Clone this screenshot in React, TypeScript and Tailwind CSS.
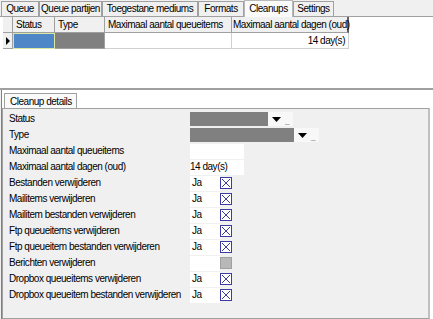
import React from "react";

const tabs = [
  { label: "Queue", w: "w-[38px]" },
  { label: "Queue partijen", w: "w-[63px]" },
  { label: "Toegestane mediums", w: "w-[96px]" },
  { label: "Formats", w: "w-[46px]" },
  { label: "Cleanups", w: "w-[49px]", active: true },
  { label: "Settings", w: "w-[41px]" },
];

const checkRows = [
  { label: "Bestanden verwijderen", ja: true },
  { label: "Mailitems verwijderen", ja: true },
  { label: "Mailitem bestanden verwijderen", ja: true },
  { label: "Ftp queueitems verwijderen", ja: true },
  { label: "Ftp queueitem bestanden verwijderen", ja: true },
  { label: "Berichten verwijderen", ja: false },
  { label: "Dropbox queueitems verwijderen", ja: true },
  { label: "Dropbox queueitem bestanden verwijderen", ja: true },
];

const CheckBox: React.FC<{ checked: boolean }> = ({ checked }) =>
  checked ? (
    <svg width="12" height="12" viewBox="0 0 12 12" className="block">
      <rect x="0.5" y="0.5" width="11" height="11" fill="#fff" stroke="#3c3ca0" />
      <path d="M2 2 L10 10 M10 2 L2 10" stroke="#3c3ca0" strokeWidth="1" />
    </svg>
  ) : (
    <svg width="12" height="12" viewBox="0 0 12 12" className="block">
      <rect x="0.5" y="0.5" width="11" height="11" fill="#b8b8b8" stroke="#a0a0a0" />
    </svg>
  );

const DropArrow: React.FC = () => (
  <div className="flex items-center h-full bg-[#f8f8f8]">
    <svg width="9" height="5" viewBox="0 0 9 5" className="ml-[4px]">
      <path d="M0 0 H9 L4.5 5 Z" fill="#000" />
    </svg>
    <span className="ml-[4px] mr-[4px] self-end mb-[1px] text-[8px] leading-none text-[#777]">_</span>
  </div>
);

export default function App() {
  return (
    <div
      className="w-[433px] h-[319px] overflow-hidden bg-[#f0f0f0] text-[10px] tracking-[-0.48px] text-black leading-none flex flex-col whitespace-nowrap"
      style={{ fontFamily: '"Liberation Sans", Arial, sans-serif' }}
    >
      {/* main tab strip */}
      <div className="h-[17px] flex items-end pl-[1px] border-b border-[#a0a0a0] shrink-0">
        {tabs.map((t) => (
          <div
            key={t.label}
            className={`${t.w} flex items-center justify-center border border-b-0 border-[#a0a0a0] ${
              t.active ? "h-[17px] bg-[#fafafa] -mb-[1px] border-[#b8b8b8]" : "h-[15px] bg-[#f0f0f0]"
            }`}
          >
            {t.label}
          </div>
        ))}
      </div>

      {/* grid */}
      <div className="h-[71px] bg-white pl-[3px] shrink-0">
        <div className="flex h-[16px]">
          <div className="w-[10px] bg-[#f0f0f0] border-r border-b border-[#a0a0a0]" />
          <div className="w-[42px] bg-[#f0f0f0] border-r border-b border-[#a0a0a0] flex items-center pl-[3px]">Status</div>
          <div className="w-[50px] bg-[#f0f0f0] border-r border-b border-[#a0a0a0] flex items-center pl-[3px]">Type</div>
          <div className="w-[127px] bg-[#f0f0f0] border-r border-b border-[#a0a0a0] flex items-center pl-[3px]">Maximaal aantal queueitems</div>
          <div className="w-[117px] bg-[#f0f0f0] border-r-2 border-b border-r-[#606060] border-b-[#a0a0a0] flex items-center pl-[1px]">Maximaal aantal dagen (oud)</div>
        </div>
        <div className="flex h-[16px]">
          <div className="w-[10px] bg-[#f0f0f0] border-r border-b border-[#a0a0a0] flex items-center justify-center">
            <svg width="4" height="8" viewBox="0 0 4 8"><path d="M0 0 L4 4 L0 8 Z" fill="#000" /></svg>
          </div>
          <div className="w-[42px] bg-[#4f86c8] border border-[#d8e8a0]" />
          <div className="w-[50px] bg-[#808080] border-r border-b border-[#a0a0a0]" />
          <div className="w-[127px] border-r border-b border-[#d0d0d0]" />
          <div className="w-[117px] border-r border-b border-[#d0d0d0] flex items-center justify-end pr-[3px]">14 day(s)</div>
        </div>
      </div>

      {/* splitter */}
      <div className="h-[2px] bg-[#a0a0a0] shrink-0" />

      {/* details area */}
      <div className="flex-1 flex bg-white">
        <div className="w-[2px] bg-[#f0f0f0] border-r border-[#808080]" />
        <div className="flex-1 flex flex-col pr-[3px] pt-[2px]">
          <div className="h-[16px] flex items-end pl-[2px]">
            <div className="w-[73px] h-[16px] bg-[#fafafa] border border-b-0 border-[#a0a0a0] flex items-center pl-[5px] -mb-[1px]">
              Cleanup details
            </div>
          </div>
          <div className="flex-1 bg-[#f0f0f0] border border-[#a0a0a0] border-r-2 border-r-[#c0c0c0] pt-[2px] pl-[6px]">
            <div className="flex h-[16px] items-center">
              <div className="w-[181px]">Status</div>
              <div className="flex h-[14px]">
                <div className="w-[78px] bg-[#808080]" />
                <DropArrow />
              </div>
            </div>
            <div className="flex h-[16px] items-center">
              <div className="w-[181px]">Type</div>
              <div className="flex h-[14px]">
                <div className="w-[104px] bg-[#808080]" />
                <DropArrow />
              </div>
            </div>
            <div className="flex h-[16px] items-center">
              <div className="w-[181px]">Maximaal aantal queueitems</div>
              <div className="w-[54px] h-[15px] bg-white" />
            </div>
            <div className="flex h-[16px] items-center">
              <div className="w-[181px]">Maximaal aantal dagen (oud)</div>
              <div className="w-[54px] h-[15px] bg-white flex items-center">14 day(s)</div>
            </div>
            {checkRows.map((r) => (
              <div key={r.label} className="flex h-[16px] items-center">
                <div className="w-[181px]">{r.label}</div>
                <div className="w-[30px] h-[15px] bg-white flex items-center pl-[2px]">{r.ja ? "Ja" : ""}</div>
                <CheckBox checked={r.ja} />
              </div>
            ))}
          </div>
        </div>
      </div>
    </div>
  );
}
